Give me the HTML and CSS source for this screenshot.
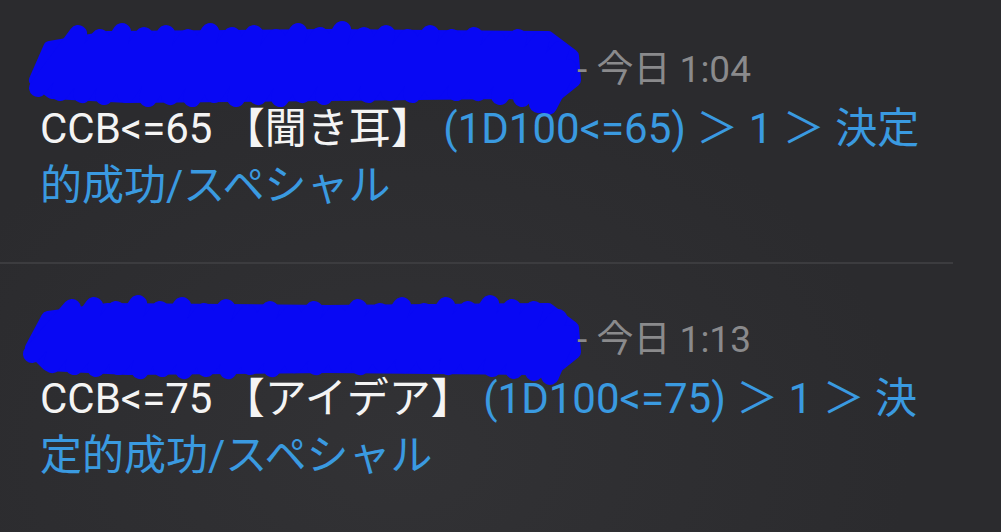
FILE: index.html
```html
<!DOCTYPE html>
<html lang="ja">
<head>
<meta charset="UTF-8">
<meta name="viewport" content="width=device-width, initial-scale=1.0">
<title>Chat</title>
<link rel="stylesheet" href="styles.css">
</head>
<body>
<div class="chat">
    <div class="message">
        <div class="header">
            <!-- name hidden under a marker scribble -->
            <svg class="scribble" width="549" height="72" viewBox="0 0 549 72">
                <path class="band" d="M8,52 L22,20 L80,10 L300,8 L520,10 L544,28 L546,52 L526,68 L480,64 L300,66 L100,68 L24,64 Z"/>
                <path class="stroke" d="M10,60 L50,6 L32,64 L72,10 L54,66 L94,4 L76,68 L116,8 L98,66 L138,6 L120,70 L160,10 L142,68 L182,4 L164,70 L204,8 L186,66 L226,6 L208,70 L248,10 L230,68 L270,4 L252,70 L292,8 L274,66 L314,2 L296,68 L336,8 L318,64 L358,6 L340,66 L380,10 L362,64 L402,6 L384,66 L424,10 L406,62 L446,8 L428,64 L468,12 L450,64 L490,10 L472,68 L512,14 L494,70 L532,22 L510,76 L540,40 L520,78"/>
            </svg>
            <span class="time">- 今日 1:04</span>
        </div>
        <div class="content">CCB&lt;=65 【聞き耳】 <span class="result">(1D100&lt;=65) ＞ 1 ＞ 決定的成功/スペシャル</span></div>
    </div>

    <div class="message">
        <div class="header">
            <svg class="scribble" width="549" height="72" viewBox="0 0 549 72">
                <path class="band" d="M4,50 L20,20 L80,12 L300,14 L520,12 L544,30 L546,54 L526,70 L500,70 L300,68 L100,70 L20,66 Z"/>
                <path class="stroke" d="M4,56 L44,10 L24,66 L66,8 L46,68 L88,12 L68,70 L110,6 L90,68 L132,12 L112,72 L154,8 L134,70 L176,14 L156,72 L198,10 L178,70 L220,16 L200,72 L242,12 L222,68 L264,16 L244,70 L286,12 L266,66 L308,16 L288,68 L330,10 L310,66 L352,14 L332,68 L374,8 L354,64 L396,14 L376,66 L418,8 L398,64 L440,12 L420,68 L462,6 L442,66 L484,10 L464,70 L506,12 L486,72 L530,20 L506,74 L540,36 L522,78"/>
            </svg>
            <span class="time">- 今日 1:13</span>
        </div>
        <div class="content">CCB&lt;=75 【アイデア】 <span class="result">(1D100&lt;=75) ＞ 1 ＞ 決定的成功/スペシャル</span></div>
    </div>
</div>
</body>
</html>
```

FILE: styles.css
```css
html, body {
    height: 100%;
}

body {
    margin: 0;
    padding: 0;
    font-family: Roboto, "Noto Sans CJK JP", sans-serif;
    background-color: #2b2b2e;
    background-image: radial-gradient(ellipse at 40% 85%, #323235 0%, #2b2b2e 60%);
    overflow: hidden;
}

.chat {
    width: 953px;
}

.message {
    padding: 34px 0 48px 40px;
    border-bottom: 2px solid #3c3c3f;
}

.message:first-child {
    padding-top: 28px;
}

.message:last-child {
    border-bottom: none;
}

.header {
    display: flex;
    align-items: flex-start;
    height: 72px;
}

.scribble {
    margin-left: -12px;
    overflow: visible;
    flex-shrink: 0;
}

.scribble .band {
    fill: #0808f4;
    stroke: #0808f4;
    stroke-width: 14;
    stroke-linejoin: round;
}

.scribble .stroke {
    fill: none;
    stroke: #0808f4;
    stroke-width: 18;
    stroke-linecap: round;
    stroke-linejoin: round;
}

.time {
    padding-top: 20px;
    font-size: 37px;
    line-height: 44px;
    color: #8a8a8c;
    white-space: nowrap;
}

.content {
    font-size: 42px;
    line-height: 57px;
    color: #f4f4f4;
}

.result {
    color: #3a9ae0;
}
```
